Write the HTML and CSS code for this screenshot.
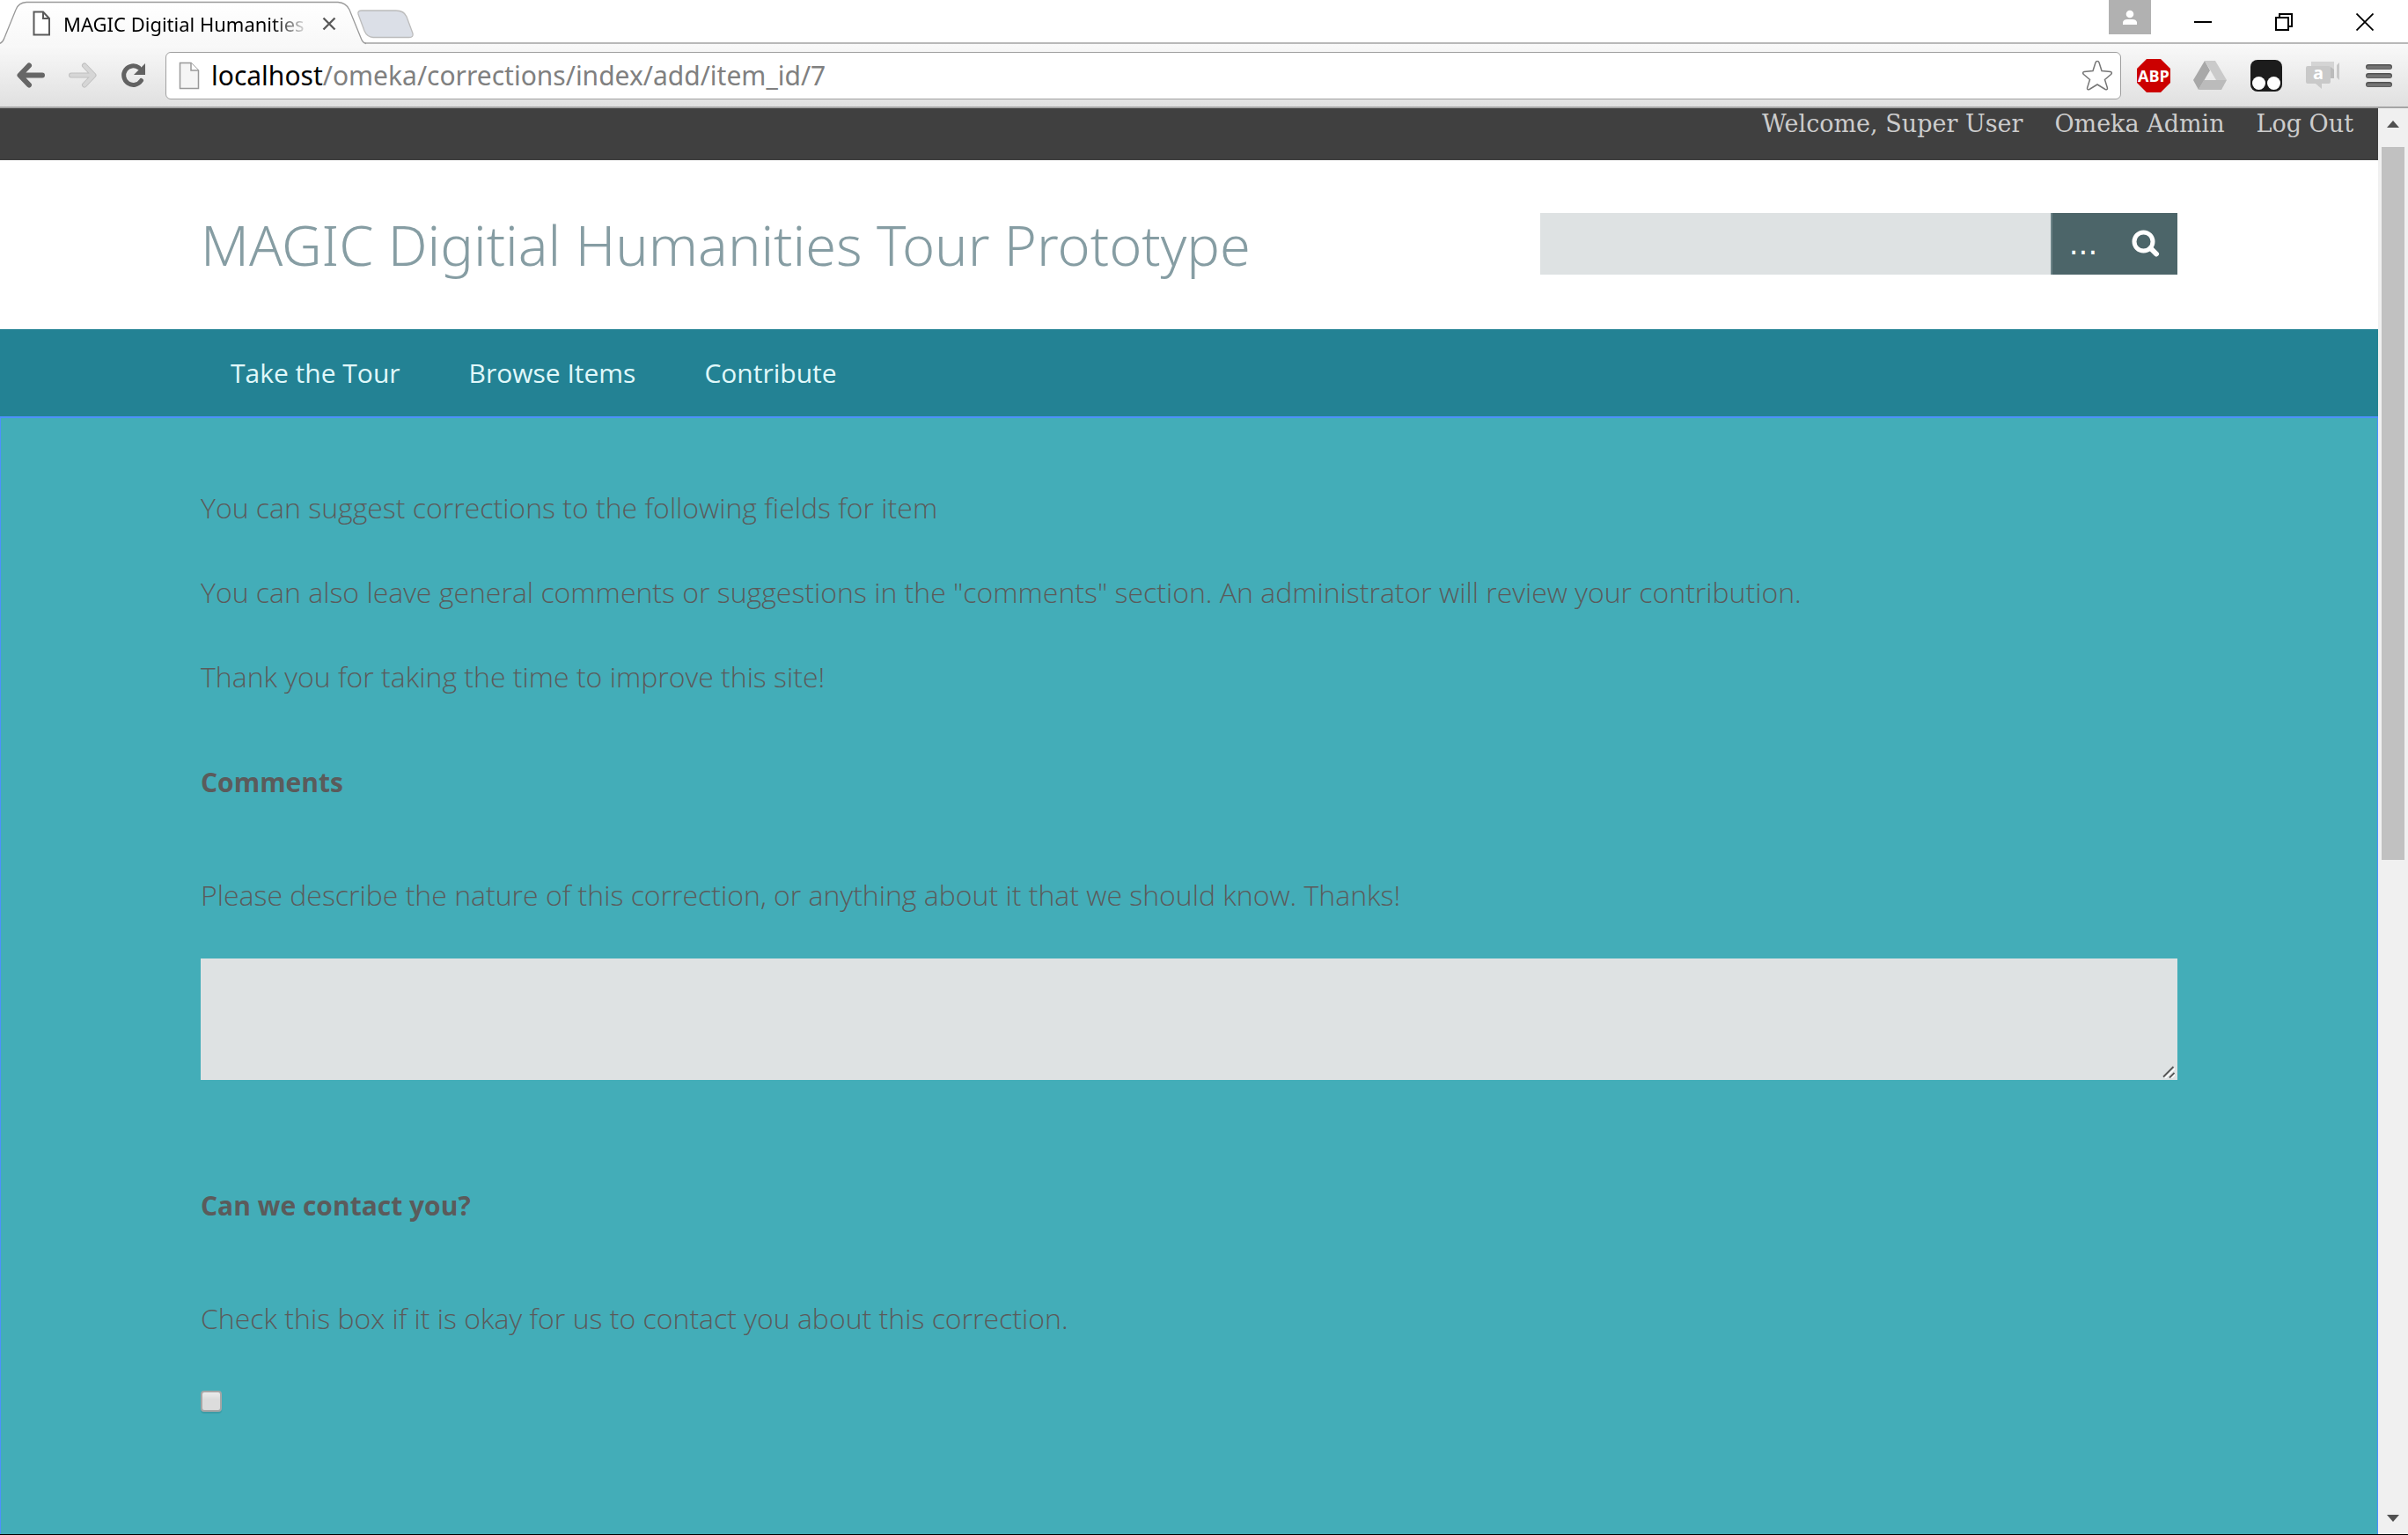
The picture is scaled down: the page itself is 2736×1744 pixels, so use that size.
FILE: index.html
```html
<!DOCTYPE html>
<html lang="en">
<head>
<meta charset="utf-8">
<title>MAGIC Digitial Humanities Tour Prototype</title>
<link rel="stylesheet" href="styles.css">
</head>
<body>
<div class="window">
  <div class="tabstrip">
    <div class="tab">
      <svg class="tab-shape" width="480" height="51" viewBox="0 0 480 51" aria-hidden="true">
        <defs>
          <linearGradient id="tabfill" x1="0" y1="0" x2="0" y2="1"><stop offset="0" stop-color="#fff"/><stop offset="1" stop-color="#f8f8f8"/></linearGradient>
        </defs>
        <path d="M0 49.500C3 48 4 46 5 43L18 11Q21 3 30 2.500H384Q393 3 397 11L410 43Q412 49 416 49.500V51H0Z" fill="url(#tabfill)"/>
        <path d="M0 49.500C3 48 4 46 5 43L18 11Q21 3 30 2.500H384Q393 3 397 11L410 43Q412 49 416 49.500" fill="none" stroke="#999" stroke-width="1.300"/>
        <path d="M411 12H450Q459 12 462 19L469 38Q470 42.500 465 42.500H424Q417 42 414 35L407 16Q406 12 411 12Z" fill="#dbdfe7" stroke="#bcbcbc" stroke-width="1.300"/>
      </svg>
      <svg class="tab-icon" width="22" height="30" viewBox="0 0 22 30" aria-hidden="true"><path d="M1.500 1.500H12L19 9V27.500H1.500Z M12 2V9H19" fill="#fff" stroke="#5a5a5a" stroke-width="2"/></svg>
      <span class="tab-title">MAGIC Digitial Humanities</span>
      <button class="plain tab-close" aria-label="Close tab"><svg width="16" height="16" viewBox="0 0 16 16"><path d="M1.500 1.500L14.500 14.500M14.500 1.500L1.500 14.500" stroke="#5a5a5a" stroke-width="2.400"/></svg></button>
    </div>
    <div class="window-controls">
      <button class="account" aria-label="Account"><svg width="18" height="18" viewBox="0 0 18 18" fill="#fff"><circle cx="9" cy="5" r="4.300"/><path d="M1 17V14Q2 11 6 11H12Q16 11 17 14V17Z"/></svg></button>
      <button class="plain control" aria-label="Minimize"><svg width="20" height="20" viewBox="0 0 20 20"><path d="M0 10H20" stroke="#000" stroke-width="2"/></svg></button>
      <button class="plain control" aria-label="Restore"><svg width="20" height="20" viewBox="0 0 20 20"><path d="M1 5H15V19H1ZM5 5V1H19V15H15" fill="none" stroke="#000" stroke-width="2"/></svg></button>
      <button class="plain control" aria-label="Close"><svg width="20" height="20" viewBox="0 0 20 20"><path d="M.5 .5L19.500 19.500M19.500 .5L.5 19.500" stroke="#000" stroke-width="1.800"/></svg></button>
    </div>
  </div>

  <div class="toolbar">
    <div class="nav-buttons">
      <button class="plain" aria-label="Back"><svg width="32" height="30" viewBox="0 0 32 30"><path d="M14 3.500L3.500 14.500L14 25.500M4.500 14.500H29" fill="none" stroke="#666" stroke-width="6" stroke-linecap="round" stroke-linejoin="round"/></svg></button>
      <button class="plain" aria-label="Forward"><svg width="32" height="30" viewBox="0 0 32 30"><path d="M18 3.500L28.500 14.500L18 25.500M27.500 14.500H3" fill="none" stroke="#c0c0c0" stroke-width="6" stroke-linecap="round" stroke-linejoin="round"/><path d="M18 3.500L28.500 14.500L18 25.500M27.500 14.500H3" fill="none" stroke="#d6d6d6" stroke-width="4" stroke-linecap="round" stroke-linejoin="round"/></svg></button>
      <button class="plain" aria-label="Reload"><svg width="30" height="30" viewBox="0 0 30 30"><path d="M23.500 20.500A10.800 10.800 0 1 1 21 6" fill="none" stroke="#626262" stroke-width="5" stroke-linecap="round"/><path d="M28 1V14H15Z" fill="#626262"/></svg></button>
    </div>
    <div class="address">
      <svg width="24" height="32" viewBox="0 0 24 32" aria-hidden="true"><path d="M1.500 1.500H14L22.500 10V30.500H1.500Z" fill="#f5f5f5" stroke="#999" stroke-width="1.500"/><path d="M14 1.500V10H22.500" fill="#fff" stroke="#999" stroke-width="1.500"/></svg>
      <div class="url"><span class="host">localhost</span>/omeka/corrections/index/add/item_id/7</div>
      <button class="plain" aria-label="Bookmark"><svg width="36" height="36" viewBox="0 0 36 36"><path d="M18 1.500Q19.500 1.500 20 3L23 12.500L33 13.500Q35.500 14.500 33.500 16.500L26.500 22.500L29.500 32Q29.500 34.500 27 33.500L18 28L9 33.500Q6.500 34.500 6.500 32L9.500 22.500L2.500 16.500Q.5 14.500 3 13.500L13 12.500L16 3Q16.500 1.500 18 1.500Z" fill="#fff" stroke="#777" stroke-width="1.500"/></svg></button>
    </div>
    <div class="extensions">
      <button class="plain" aria-label="AdBlock Plus"><svg width="38" height="38" viewBox="0 0 38 38"><path d="M11 0H27L38 11V27L27 38H11L0 27V11Z" fill="#c00"/><text class="abp" x="19" y="26" text-anchor="middle">ABP</text></svg></button>
      <button class="plain" aria-label="Drive"><svg width="38" height="34" viewBox="0 0 38 34"><path d="M13 0L19 11L6 33L0 22Z" fill="#a8a8a8"/><path d="M13 0H25L38 22H26Z" fill="#cacaca"/><path d="M12 22H38L32 33H6Z" fill="#bbb"/></svg></button>
      <button class="plain" aria-label="Tampermonkey"><svg width="36" height="36" viewBox="0 0 36 36"><rect width="36" height="36" rx="8" fill="#1c1c1c"/><circle cx="9.500" cy="26.500" r="7.500" fill="#fff"/><circle cx="26.500" cy="26.500" r="7.500" fill="#fff"/></svg></button>
      <button class="plain" aria-label="Hangouts"><svg width="38" height="32" viewBox="0 0 38 32"><path d="M6 0H32V19H6Z" fill="#d4d4d4"/><path d="M35 4L38 1V21L35 18Z" fill="#c8c8c8"/><path d="M28 6L32 9V19H28Z" fill="#bbb"/><path d="M2 5H26Q28 5 28 7V23Q28 25 26 25H18V31L11 25H2Q0 25 0 23V7Q0 5 2 5Z" fill="#c9c9c9"/><text class="hang" x="14" y="20" text-anchor="middle">a</text></svg></button>
      <button class="plain" aria-label="Menu"><svg width="30" height="28" viewBox="0 0 30 28"><path d="M3 4H27M3 14H27M3 24H27" stroke="#505050" stroke-width="6" stroke-linecap="round"/><path d="M3 4.500H27M3 14.500H27M3 24.500H27" stroke="#737373" stroke-width="4" stroke-linecap="round"/></svg></button>
    </div>
  </div>

  <div class="viewport">
    <div class="page">
      <nav class="admin-bar">
        <a href="#">Welcome, Super User</a>
        <a href="#">Omeka Admin</a>
        <a href="#">Log Out</a>
      </nav>
      <header class="site-header">
        <h1><a href="#">MAGIC Digitial Humanities Tour Prototype</a></h1>
        <form class="search">
          <input type="text" aria-label="Search">
          <button type="button" class="advanced" aria-label="Advanced search">...</button>
          <button type="button" class="submit" aria-label="Submit search"><svg width="32" height="32" viewBox="0 0 32 32"><path d="M21.500 21L28 27.500" stroke="#fff" stroke-width="6" stroke-linecap="round"/><circle cx="13.500" cy="13.500" r="10.500" fill="none" stroke="#fff" stroke-width="5"/></svg></button>
        </form>
      </header>
      <nav class="main-nav">
        <a href="#">Take the Tour</a>
        <a href="#">Browse Items</a>
        <a href="#">Contribute</a>
      </nav>
      <main class="content">
        <div class="intro">
          <p>You can suggest corrections to the following fields for item</p>
          <p>You can also leave general comments or suggestions in the "comments" section. An administrator will review your contribution.</p>
          <p>Thank you for taking the time to improve this site!</p>
        </div>
        <form>
          <div class="field">
            <label for="comments">Comments</label>
            <p>Please describe the nature of this correction, or anything about it that we should know. Thanks!</p>
            <div class="textarea-wrap">
              <textarea id="comments"></textarea>
              <svg class="grip" width="14" height="14" viewBox="0 0 14 14" aria-hidden="true"><path d="M3 14L14 3M9 15L15 9" stroke="#fff" stroke-width="1.500"/><path d="M1 12.500L12.500 1M8 13.500L13.500 8" stroke="#555" stroke-width="1.800"/></svg>
            </div>
          </div>
          <div class="field">
            <label for="contact">Can we contact you?</label>
            <p>Check this box if it is okay for us to contact you about this correction.</p>
            <input type="checkbox" id="contact">
          </div>
        </form>
      </main>
    </div>
    <div class="scrollbar" aria-hidden="true">
      <svg width="14" height="8" viewBox="0 0 14 8"><path d="M0 8L7 0L14 8Z" fill="#505050"/></svg>
      <div class="thumb"></div>
      <svg class="down" width="14" height="8" viewBox="0 0 14 8"><path d="M0 0L7 8L14 0Z" fill="#505050"/></svg>
    </div>
  </div>
</div>
</body>
</html>
```
FILE: styles.css
```css
* { box-sizing: border-box; }

body {
  margin: 0;
  font-family: "Noto Sans", "Open Sans", sans-serif;
  color: #5b5b5b;
  background: #fff;
}

button, input, textarea { font: inherit; margin: 0; padding: 0; border: 0; border-radius: 0; }
button svg { display: block; }
a { color: inherit; text-decoration: none; }

.window {
  display: flex;
  flex-direction: column;
  min-height: 100vh;
  border-bottom: 1px solid #000;
}

.plain { display: flex; align-items: center; justify-content: center; background: none; }

/* Browser tab strip */
.tabstrip {
  display: flex;
  justify-content: space-between;
  height: 50px;
  background: linear-gradient(#fff 48px, #b8b8b8 48px);
}

.tab {
  position: relative;
  display: flex;
  align-items: center;
  width: 412px;
  padding: 3px 30px 0 37px;
}

.tab-shape { position: absolute; left: 0; top: 0; }
.tab-icon { position: relative; margin-right: 13px; }

.tab-title {
  position: relative;
  width: 281px;
  white-space: nowrap;
  font-size: 22px;
  line-height: 30px;
  color: #000;
  -webkit-mask-image: linear-gradient(90deg, #000 236px, transparent 280px);
  mask-image: linear-gradient(90deg, #000 236px, transparent 280px);
}

.tab-close { position: relative; margin-left: 13px; }

.window-controls { display: flex; align-items: flex-start; padding-right: 3px; }

.account {
  width: 48px;
  height: 39px;
  margin-right: 13px;
  padding: 8px 15px;
  background: #b1b1b1;
}

.control { width: 92px; height: 49px; }

/* Browser toolbar */
.toolbar {
  display: flex;
  align-items: center;
  height: 73px;
  padding: 0 18px 0 19px;
  background: linear-gradient(#f9f9f9, #e0e0e0);
  border-bottom: 2px solid #a5a5a5;
}

.nav-buttons { display: flex; gap: 27px; width: 169px; }

.address {
  display: flex;
  align-items: center;
  flex: 1;
  height: 54px;
  padding: 0 8px 0 14px;
  background: #fff;
  border: 1px solid #a0a0a0;
  border-radius: 6px;
}

.url {
  flex: 1;
  padding-left: 13px;
  font-size: 30px;
  line-height: 40px;
  color: #808080;
}

.host { color: #000; }

.extensions { display: grid; grid-template-columns: repeat(5, 38px); gap: 26px; margin-left: 18px; margin-right: -4px; }

.abp { font: 700 18px "Open Sans", sans-serif; fill: #fff; }
.hang { font: 700 20px "Open Sans", sans-serif; fill: #fff; }

/* Page viewport with its scrollbar */
.viewport { display: flex; flex: 1; }
.page { display: flex; flex-direction: column; flex: 1; }

.scrollbar {
  display: flex;
  flex-direction: column;
  align-items: center;
  width: 34px;
  padding: 14px 4px;
  background: #f0f0f0;
}

.thumb { width: 100%; height: 50vh; max-height: 810px; margin-top: 22px; background: #c1c1c1; }
.down { margin-top: auto; }

.admin-bar {
  display: flex;
  justify-content: flex-end;
  gap: 36px;
  height: 59px;
  padding: 2px 28px 0;
  font-family: "DejaVu Serif", serif;
  font-size: 27px;
  line-height: 32px;
  color: #ccc;
  background: #404040;
}

.site-header {
  display: flex;
  align-items: center;
  justify-content: space-between;
  height: 192px;
  padding: 0 228px;
}

h1 {
  margin: 0;
  font-size: 63px;
  line-height: 80px;
  font-weight: 300;
  color: #869da3;
}

.search { display: flex; width: 724px; height: 70px; margin-bottom: 2px; }
.search input { flex: 1; min-width: 0; padding: 0 16px; background: #dee2e3; }
.search button { width: 72px; color: #fff; background: #4c6569; }

.search .advanced {
  border-left: 2px solid #6b8387;
  font: 34px "DejaVu Sans", sans-serif;
}

.search .submit { padding: 0 20px; }

.main-nav {
  display: flex;
  gap: 78px;
  height: 99px;
  padding: 0 262px;
  font-family: "Open Sans", sans-serif;
  font-size: 30px;
  line-height: 100px;
  color: #e0f8fa;
  background: #238294;
}

.content {
  flex: 1;
  padding: 78px 227px 48px;
  font-family: "Open Sans", sans-serif;
  font-size: 32px;
  line-height: 48px;
  font-weight: 300;
  background: #43adb8;
  border: 1px solid #4d90fe;
  border-top-width: 2px;
  border-bottom: 0;
}

.intro p { margin: 0 0 48px; }
.intro p:last-child { margin-bottom: 72px; }

.field + .field { margin-top: 119px; }
.field label { display: block; font-size: 30px; font-weight: 700; }
.field p { margin: 80px 0 48px; }

.textarea-wrap { position: relative; }

textarea {
  display: block;
  width: 100%;
  height: 138px;
  padding: 16px;
  background: #dee2e3;
  resize: none;
}

.grip { position: absolute; right: 3px; bottom: 2px; }

input[type="checkbox"] {
  appearance: none;
  display: block;
  width: 24px;
  height: 24px;
  margin-top: 58px;
  background: linear-gradient(#ececec, #dcdcdc 40%);
  border: 2px solid #a6a6a6;
  border-radius: 4px;
  box-shadow: 0 2px 1px rgba(0, 0, 0, .1);
}
```
